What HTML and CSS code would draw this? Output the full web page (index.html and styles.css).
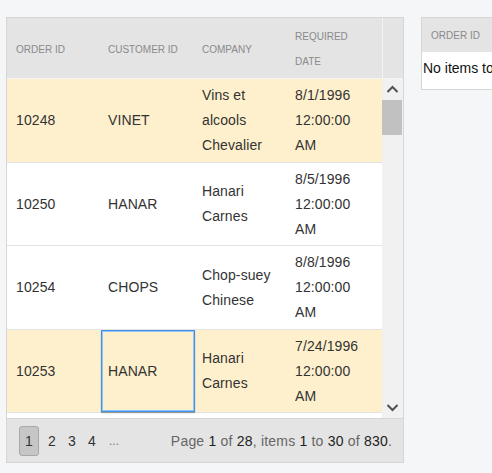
FILE: index.html
```html
<!DOCTYPE html>
<html>
<head>
<meta charset="utf-8">
<link rel="stylesheet" href="styles.css">
</head>
<body>
<div class="page">
  <div class="grid main">
    <div class="head">
      <div class="hc c1">Order ID</div>
      <div class="hc">Customer ID</div>
      <div class="hc">Company</div>
      <div class="hc">Required Date</div>
      <div class="hspace"></div>
    </div>
    <div class="bodywrap">
      <div class="rows">
        <div class="row sel">
          <div class="cell c1">10248</div>
          <div class="cell">VINET</div>
          <div class="cell">Vins et alcools Chevalier</div>
          <div class="cell">8/1/1996 12:00:00 AM</div>
        </div>
        <div class="row">
          <div class="cell c1">10250</div>
          <div class="cell">HANAR</div>
          <div class="cell">Hanari Carnes</div>
          <div class="cell">8/5/1996 12:00:00 AM</div>
        </div>
        <div class="row">
          <div class="cell c1">10254</div>
          <div class="cell">CHOPS</div>
          <div class="cell">Chop-suey Chinese</div>
          <div class="cell">8/8/1996 12:00:00 AM</div>
        </div>
        <div class="row sel">
          <div class="cell c1">10253</div>
          <div class="cell focus">HANAR</div>
          <div class="cell">Hanari Carnes</div>
          <div class="cell">7/24/1996 12:00:00 AM</div>
        </div>
      </div>
      <div class="scrollbar">
        <svg class="arrow up" width="21" height="14" viewBox="0 0 21 14"><path d="M5.5 10 L10.5 5 L15.5 10" fill="none" stroke="#505050" stroke-width="2"/></svg>
        <div class="thumb"></div>
        <div class="track"></div>
        <svg class="arrow down" width="21" height="14" viewBox="0 0 21 14"><path d="M5.5 4 L10.5 9 L15.5 4" fill="none" stroke="#505050" stroke-width="2"/></svg>
      </div>
    </div>
    <div class="pager">
      <div class="pages">
        <span class="pg cur">1</span>
        <span class="pg">2</span>
        <span class="pg">3</span>
        <span class="pg">4</span>
        <span class="pg dots">...</span>
      </div>
      <div class="info">Page <b>1</b> of <b>28</b>, items <b>1</b> to <b>30</b> of <b>830</b>.</div>
    </div>
  </div>
  <div class="grid side">
    <div class="shead"><div class="shc">Order ID</div></div>
    <div class="sbody">No items to display</div>
  </div>
</div>
</body>
</html>
```
FILE: styles.css
```css
html, body {
  margin: 0;
  padding: 0;
  background: #f5f6f8;
  overflow: hidden;
  font-family: "Liberation Sans", Arial, sans-serif;
}
.page {
  display: flex;
  align-items: flex-start;
  gap: 17px;
  padding: 17px 0 0 6px;
  width: 700px;
}
.grid {
  border: 1px solid #d6d6d6;
  background: #fff;
  box-sizing: border-box;
  flex: none;
}
.main {
  width: 398px;
}
.head {
  display: grid;
  grid-template-columns: 94px 94px 93px 94px 21px;
  height: 60px;
  background: #e4e4e4;
  border-bottom: 1px solid #f4f4f4;
}
.hc {
  display: flex;
  align-items: center;
  padding: 2px 10px 0 7px;
  font-size: 10px;
  line-height: 25px;
  text-transform: uppercase;
  color: #8a8a8a;
}
.hc.c1 { padding-left: 9px; }
.hspace {
  border-left: 1px solid #f4f4f4;
}
.bodywrap {
  display: flex;
  height: 339px;
  background: #fff;
}
.rows {
  width: 375px;
}
.row {
  display: grid;
  grid-template-columns: 94px 94px 93px 94px;
  border-bottom: 1px solid #e3e3e3;
  background: #fff;
}
.row.sel {
  background: #fff0cd;
}
.cell {
  display: flex;
  align-items: center;
  padding: 4px 10px 3.5px 7px;
  font-size: 14px;
  line-height: 25px;
  color: #333;
  box-sizing: border-box;
  letter-spacing: 0.1px;
}
.cell.c1 { padding-left: 9px; }
.cell.focus {
  border: 1px solid #3f92ea;
  box-shadow: inset 0 0 0 1px #8fc2f5, 0 1px 1px #9a9a9a;
  padding-left: 6px;
}
.scrollbar {
  width: 21px;
  background: #f1f1f1;
  display: flex;
  flex-direction: column;
}
.arrow {
  display: block;
  flex: none;
}
.arrow.up {
  margin-top: 3px;
}
.thumb {
  height: 35px;
  margin: 4px 1px 0 0;
  background: #c1c1c1;
  flex: none;
}
.track {
  flex: 1;
}
.arrow.down {
  margin-bottom: 3px;
}
.pager {
  border-top: 1px solid #d6d6d6;
  background: #e4e4e4;
  height: 43px;
  display: flex;
  align-items: center;
  justify-content: space-between;
  padding: 0 11px 0 12px;
  font-size: 14px;
  color: #666;
}
.pages {
  display: flex;
  align-items: center;
}
.pg {
  width: 20px;
  text-align: center;
  line-height: 30px;
  color: #333;
}
.pg.cur {
  box-sizing: border-box;
  width: 20px;
  height: 30px;
  line-height: 28px;
  border: 1px solid #a8a8a8;
  border-radius: 3px;
  background: #c6c6c6;
  margin-right: 3px;
}
.pg.dots {
  color: #777;
  font-size: 12px;
  margin-left: 2px;
}
.info {
  padding-top: 1px;
  letter-spacing: 0.2px;
}
.info b {
  font-weight: normal;
  color: #222;
}
.side {
  width: 200px;
}
.shead {
  height: 34px;
  background: #e4e4e4;
  display: flex;
  align-items: center;
}
.shc {
  padding-left: 9px;
  font-size: 10px;
  text-transform: uppercase;
  color: #8a8a8a;
}
.sbody {
  padding: 4px 0 8px 1px;
  font-size: 14px;
  line-height: 25px;
  color: #111;
}
```
